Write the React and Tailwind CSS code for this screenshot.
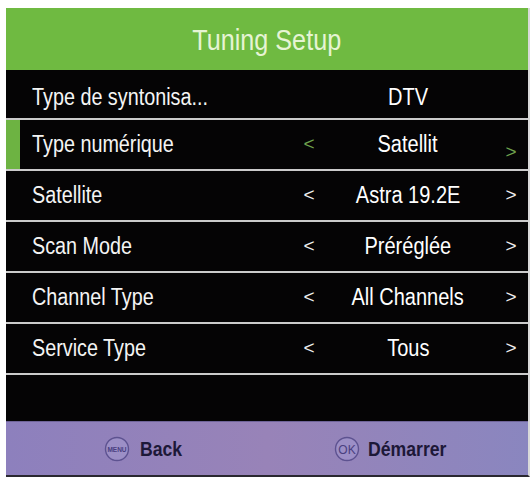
import React from "react";

const rows = [
    { label: "Type de syntonisa...", value: "DTV", arrows: false },
    { label: "Type numérique", value: "Satellit", arrows: true, active: true },
    { label: "Satellite", value: "Astra 19.2E", arrows: true },
    { label: "Scan Mode", value: "Préréglée", arrows: true },
    { label: "Channel Type", value: "All Channels", arrows: true },
    { label: "Service Type", value: "Tous", arrows: true },
];

// the TV menu font is a condensed grotesque, Liberation Sans squeezed to match
const KeyIcon = ({ label, small }) => (
    <svg width="26" height="26" viewBox="0 0 26 26">
        <circle cx="13" cy="13" r="11.5" fill="#9c8fc6" stroke="#5d5290" strokeWidth="1.4" />
        <text
            x="13"
            y={small ? 15.5 : 17.5}
            textAnchor="middle"
            fontFamily="Liberation Sans, Arial, sans-serif"
            fontSize={small ? 6.5 : 12}
            fontWeight={small ? 700 : 400}
            fill="#4a4080"
        >
            {label}
        </text>
    </svg>
);

const App = () => {
    return (
        <div className="w-[532px] h-[482px] bg-white pt-2 pl-[6px] font-['Liberation_Sans',Arial,sans-serif]">
            <div className="w-[524px] bg-[#050405] border-r-2 border-r-[#d9d9d9] border-b-2 border-b-[#2a2830]">
                <div className="h-[62px] bg-[#6fba41] flex items-center justify-center text-[30px] text-[#e6f4d4]">
                    <span className="inline-block scale-x-[0.84]">Tuning Setup</span>
                </div>

                {rows.map((row, i) => (
                    <div
                        key={row.label}
                        className={`grid grid-cols-[288px_30px_168px_38px] items-center border-b-2 border-[#cbcbcb] text-white ${
                            i === 0 ? "h-[50px] pt-[6px]" : "h-[51px]"
                        }`}
                    >
                        <div
                            className={`h-full flex items-center text-[23px] text-[#f4f4f4] ${
                                row.active ? "border-l-[14px] border-[#6db342] pl-[12px]" : "pl-[26px]"
                            }`}
                        >
                            <span className="inline-block origin-left scale-x-[0.86] whitespace-nowrap">{row.label}</span>
                        </div>
                        <div
                            className={`text-center text-[19px] ${row.active ? "text-[#6fa34e]" : "text-[#f0f0f0]"}`}
                        >
                            {row.arrows ? "<" : ""}
                        </div>
                        <div className="text-center text-[23px] whitespace-nowrap">
                            <span className="inline-block scale-x-[0.87]">{row.value}</span>
                        </div>
                        <div
                            className={`text-center text-[19px] ${
                                row.active ? "text-[#6fa34e] pt-[16px]" : "text-[#f0f0f0]"
                            }`}
                        >
                            {row.arrows ? ">" : ""}
                        </div>
                    </div>
                ))}

                <div className="h-[46px]" />

                <div className="h-[54px] flex items-center bg-gradient-to-r from-[#8d80bd] via-[#9883b8] to-[#8a86bf] border-t border-[#6f6499] text-[21px] font-bold text-[#1d1838]">
                    <div className="flex items-center gap-[10px] ml-[98px]">
                        <KeyIcon label="MENU" small />
                        <span className="inline-block origin-left scale-x-[0.84]">Back</span>
                    </div>
                    <div className="flex items-center gap-[8px] ml-[144px]">
                        <KeyIcon label="OK" />
                        <span className="inline-block origin-left scale-x-[0.84]">Démarrer</span>
                    </div>
                </div>
            </div>
        </div>
    );
};

export default App;
